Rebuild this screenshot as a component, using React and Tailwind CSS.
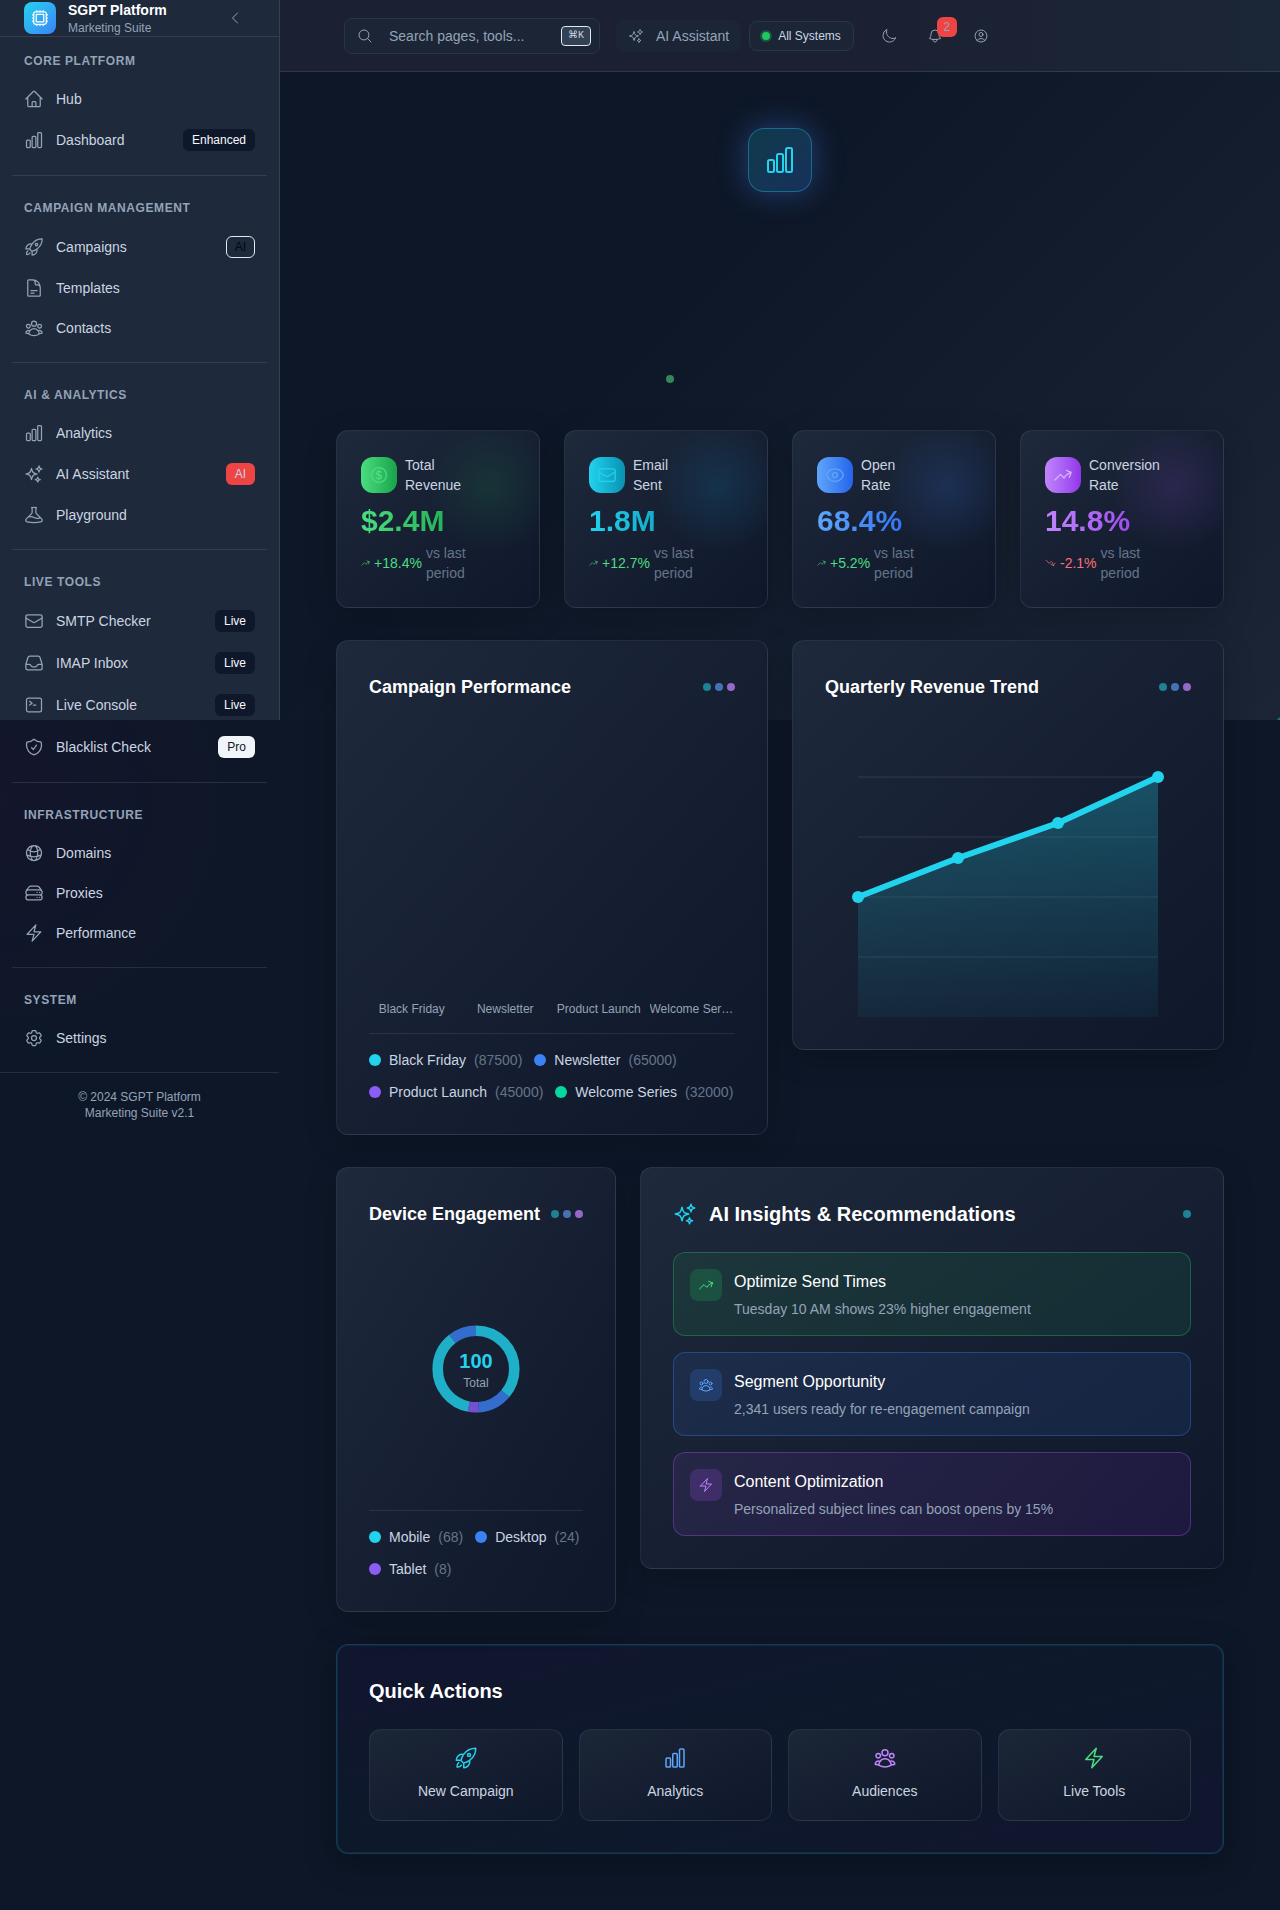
import React from "react";
import {
  HiOutlineArrowTrendingDown,
  HiOutlineArrowTrendingUp,
  HiOutlineBeaker,
  HiOutlineBell,
  HiOutlineBolt,
  HiOutlineChartBar,
  HiOutlineChevronLeft,
  HiOutlineCog6Tooth,
  HiOutlineCommandLine,
  HiOutlineCpuChip,
  HiOutlineCurrencyDollar,
  HiOutlineDocumentText,
  HiOutlineEnvelope,
  HiOutlineEye,
  HiOutlineGlobeAlt,
  HiOutlineHome,
  HiOutlineInbox,
  HiOutlineMagnifyingGlass,
  HiOutlineMoon,
  HiOutlineRocketLaunch,
  HiOutlineServerStack,
  HiOutlineShieldCheck,
  HiOutlineSparkles,
  HiOutlineUserCircle,
  HiOutlineUserGroup,
} from "react-icons/hi2";

const badgeStyles = {
  dark: "border-transparent bg-[#0f172a] text-[#f8fafc]",
  outline: "border-[#e2e8f0] text-[#020617]",
  red: "border-transparent bg-[#ef4444] text-[#cbd5e1]",
  light: "border-transparent bg-[#f1f5f9] text-[#0f172a]",
};

const sections = [
  {
    title: "CORE PLATFORM",
    items: [
      { icon: HiOutlineHome, label: "Hub" },
      { icon: HiOutlineChartBar, label: "Dashboard", badge: "Enhanced", tone: "dark" },
    ],
  },
  {
    title: "CAMPAIGN MANAGEMENT",
    items: [
      { icon: HiOutlineRocketLaunch, label: "Campaigns", badge: "AI", tone: "outline" },
      { icon: HiOutlineDocumentText, label: "Templates" },
      { icon: HiOutlineUserGroup, label: "Contacts" },
    ],
  },
  {
    title: "AI & ANALYTICS",
    items: [
      { icon: HiOutlineChartBar, label: "Analytics" },
      { icon: HiOutlineSparkles, label: "AI Assistant", badge: "AI", tone: "red" },
      { icon: HiOutlineBeaker, label: "Playground" },
    ],
  },
  {
    title: "LIVE TOOLS",
    items: [
      { icon: HiOutlineEnvelope, label: "SMTP Checker", badge: "Live", tone: "dark" },
      { icon: HiOutlineInbox, label: "IMAP Inbox", badge: "Live", tone: "dark" },
      { icon: HiOutlineCommandLine, label: "Live Console", badge: "Live", tone: "dark" },
      { icon: HiOutlineShieldCheck, label: "Blacklist Check", badge: "Pro", tone: "light" },
    ],
  },
  {
    title: "INFRASTRUCTURE",
    items: [
      { icon: HiOutlineGlobeAlt, label: "Domains" },
      { icon: HiOutlineServerStack, label: "Proxies" },
      { icon: HiOutlineBolt, label: "Performance" },
    ],
  },
  { title: "SYSTEM", items: [{ icon: HiOutlineCog6Tooth, label: "Settings" }] },
];

function Sidebar() {
  return (
    <aside className="h-[720px] w-[280px] shrink-0 border-r border-white/10 bg-[#1e293b]">
      <div className="flex items-center border-b border-white/10 px-6">
        <div className="flex h-8 w-8 items-center justify-center rounded-lg bg-linear-to-br from-[#22d3ee] to-[#3b82f6] text-white">
          <HiOutlineCpuChip size={20} />
        </div>
        <div className="ml-3 flex-1">
          <div className="text-sm font-bold text-white">SGPT Platform</div>
          <div className="text-xs text-[#94a3b8]">Marketing Suite</div>
        </div>
        <button type="button" aria-label="Collapse sidebar" className="mr-3 text-[#94a3b8]">
          <HiOutlineChevronLeft size={16} />
        </button>
      </div>
      <nav className="px-3 pt-4">
        {sections.map((section, i) => (
          <div key={section.title} className={i > 0 ? "mt-[14px] border-t border-white/10 pt-6" : ""}>
            <h2 className="mb-[10px] px-3 text-xs font-semibold tracking-wider text-[#94a3b8]">{section.title}</h2>
            <ul>
              {section.items.map(({ icon: Icon, label, badge, tone }) => (
                <li key={label}>
                  <a href="#" className="flex items-center gap-3 px-3 py-[10px] text-sm text-[#cbd5e1]">
                    <Icon size={20} className="shrink-0 text-[#94a3b8]" />
                    <span className="flex-1">{label}</span>
                    {badge && (
                      <span className={`rounded-md border px-2 py-[2px] text-xs ${badgeStyles[tone]}`}>{badge}</span>
                    )}
                  </a>
                </li>
              ))}
            </ul>
          </div>
        ))}
      </nav>
      <div className="mt-[14px] border-t border-white/10 py-4 text-center text-xs text-[#94a3b8]">
        <div>© 2024 SGPT Platform</div>
        <div>Marketing Suite v2.1</div>
      </div>
    </aside>
  );
}

function Header() {
  return (
    <header className="flex h-[72px] items-center border-b border-white/10 bg-linear-to-r from-[#1b2132] from-60% to-[#1b2636] px-16 text-[#94a3b8]">
      <label className="flex h-9 w-64 items-center rounded-lg border border-[#263645] bg-[#1b2535] pr-2 pl-3">
        <HiOutlineMagnifyingGlass size={16} className="shrink-0" />
        <input
          type="text"
          aria-label="Search"
          placeholder="Search pages, tools..."
          className="ml-4 w-0 flex-1 bg-transparent text-sm outline-none placeholder:text-[#94a3b8]"
        />
        <kbd className="flex h-5 w-[30px] items-center justify-center rounded-sm border border-[#e2e8f0] bg-[#334155] font-['Liberation_Mono','DejaVu_Sans',monospace] text-[10px] text-[#cbd5e1]">
          ⌘K
        </kbd>
      </label>
      <button type="button" className="ml-4 flex h-8 items-center gap-3 rounded-lg bg-[#1b2535] px-3 text-sm">
        <HiOutlineSparkles size={16} />
        AI Assistant
      </button>
      <button
        type="button"
        className="ml-2 flex h-[30px] items-center gap-2 rounded-lg border border-[#263645] bg-[#1b2535] px-3 text-xs text-[#cbd5e1]"
      >
        <span className="h-2 w-2 rounded-full bg-[#22c55e] ring-2 ring-[#22c55e]/30" />
        All Systems
      </button>
      <div className="ml-4 flex gap-2">
        <button type="button" aria-label="Toggle theme" className="flex h-8 w-[38px] items-center justify-center">
          <HiOutlineMoon size={16} />
        </button>
        <button
          type="button"
          aria-label="Notifications"
          className="relative flex h-8 w-[38px] items-center justify-center"
        >
          <HiOutlineBell size={16} />
          <span className="absolute -top-[3px] -right-[3px] flex h-5 w-5 items-center justify-center rounded-md bg-[#ef4444] text-xs">
            2
          </span>
        </button>
        <button type="button" aria-label="Account" className="flex h-8 w-[38px] items-center justify-center">
          <HiOutlineUserCircle size={16} />
        </button>
      </div>
    </header>
  );
}

const kpis = [
  {
    icon: HiOutlineCurrencyDollar,
    label: "Total Revenue",
    value: "$2.4M",
    change: "+18.4%",
    up: true,
    fill: "from-[#4ade80] to-[#16a34a]",
    tint: "text-[#4ade80]",
    glow: "bg-[radial-gradient(closest-side,rgba(34,197,94,0.12),transparent)]",
  },
  {
    icon: HiOutlineEnvelope,
    label: "Email Sent",
    value: "1.8M",
    change: "+12.7%",
    up: true,
    fill: "from-[#22d3ee] to-[#0891b2]",
    tint: "text-[#22d3ee]",
    glow: "bg-[radial-gradient(closest-side,rgba(14,165,233,0.14),transparent)]",
  },
  {
    icon: HiOutlineEye,
    label: "Open Rate",
    value: "68.4%",
    change: "+5.2%",
    up: true,
    fill: "from-[#60a5fa] to-[#2563eb]",
    tint: "text-[#60a5fa]",
    glow: "bg-[radial-gradient(closest-side,rgba(59,130,246,0.17),transparent)]",
  },
  {
    icon: HiOutlineArrowTrendingUp,
    label: "Conversion Rate",
    value: "14.8%",
    change: "-2.1%",
    up: false,
    fill: "from-[#c084fc] to-[#9333ea]",
    tint: "text-[#d8b4fe]",
    glow: "bg-[radial-gradient(closest-side,rgba(168,85,247,0.14),transparent)]",
  },
];

const card =
  "rounded-xl border border-[#94a3b8]/15 bg-linear-to-br from-[#1e293b] to-[#0f172a] shadow-[0_8px_32px_rgba(0,0,0,0.2)]";

function KpiCard({ icon: Icon, label, value, change, up, fill, tint, glow }) {
  const Trend = up ? HiOutlineArrowTrendingUp : HiOutlineArrowTrendingDown;
  return (
    <div className={`relative overflow-hidden p-6 ${card}`}>
      <div className={`absolute -top-2 -right-4 h-32 w-32 ${glow}`} />
      <div className="relative">
        <div className="flex items-center gap-2">
          <div className={`flex h-9 w-9 shrink-0 items-center justify-center rounded-xl bg-linear-to-r ${fill} ${tint}`}>
            <Icon size={20} />
          </div>
          <div className="w-min text-sm text-[#cbd5e1]">{label}</div>
        </div>
        <div className={`mt-2 bg-linear-to-r to-75% bg-clip-text text-3xl font-bold text-transparent ${fill}`}>
          {value}
        </div>
        <div className="mt-1 flex items-center gap-1 text-sm">
          <span className={`flex items-center gap-1 ${up ? "text-[#4ade80]" : "text-[#f87171]"}`}>
            <Trend className={up ? "h-4 w-[9px] shrink-0" : "h-4 w-[11px] shrink-0"} />
            {change}
          </span>
          <span className="w-14 text-[#64748b]">vs last period</span>
        </div>
      </div>
    </div>
  );
}

function Dots() {
  return (
    <div className="flex gap-1">
      <span className="h-2 w-2 rounded-full bg-[#1f8294]" />
      <span className="h-2 w-2 rounded-full bg-[#4472b2]" />
      <span className="h-2 w-2 rounded-full bg-[#9368c6]" />
    </div>
  );
}

function CardTitle({ children }) {
  return (
    <div className="flex items-center justify-between">
      <h2 className="text-lg font-bold whitespace-nowrap text-white">{children}</h2>
      <Dots />
    </div>
  );
}

function Legend({ items }) {
  return (
    <ul className="flex flex-wrap gap-3 border-t border-[#94a3b8]/15 pt-4 text-sm">
      {items.map(([label, count, color]) => (
        <li key={label} className="flex items-center gap-2">
          <span className={`h-3 w-3 rounded-full ${color}`} />
          <span className="text-[#cbd5e1]">{label}</span>
          <span className="text-[#64748b]">({count})</span>
        </li>
      ))}
    </ul>
  );
}

const campaigns = [
  ["Black Friday", 87500, "bg-[#22d3ee]"],
  ["Newsletter", 65000, "bg-[#3b82f6]"],
  ["Product Launch", 45000, "bg-[#8b5cf6]"],
  ["Welcome Series", 32000, "bg-[#06d6a0]"],
];

const devices = [
  ["Mobile", 68, "bg-[#22d3ee]"],
  ["Desktop", 24, "bg-[#3b82f6]"],
  ["Tablet", 8, "bg-[#8b5cf6]"],
];

const trend = [
  [33, 172],
  [133, 133],
  [233, 98],
  [333, 52],
];

function TrendChart() {
  const line = trend.map((p) => p.join(",")).join(" ");
  return (
    <svg viewBox="0 0 366 292" className="mt-6 block w-full" role="img" aria-label="Quarterly revenue trend">
      <defs>
        <linearGradient id="area" x1="0" y1="0" x2="0" y2="1">
          <stop offset="0" stopColor="#22d3ee" stopOpacity="0.28" />
          <stop offset="1" stopColor="#22d3ee" stopOpacity="0.05" />
        </linearGradient>
      </defs>
      {[52, 112, 172, 232].map((y) => (
        <line key={y} x1="33" x2="333" y1={y} y2={y} stroke="#ffffff" strokeOpacity="0.05" strokeWidth="2" />
      ))}
      <polygon points={`${line} 333,292 33,292`} fill="url(#area)" />
      <polyline points={line} fill="none" stroke="#22d3ee" strokeWidth="6" strokeLinejoin="round" />
      {trend.map(([x, y]) => (
        <circle key={x} cx={x} cy={y} r="6" fill="#22d3ee" />
      ))}
    </svg>
  );
}

const arcs = [
  [0, 130, "#22d3ee"],
  [130, 176, "#3b82f6"],
  [176, 191, "#8b5cf6"],
  [191, 322, "#22d3ee"],
  [322, 360, "#3b82f6"],
];

function Donut() {
  return (
    <div className="my-6 flex h-[234px] items-center justify-center">
      <div className="grid place-items-center">
        <svg width="88" height="88" viewBox="0 0 88 88" className="col-start-1 row-start-1 -rotate-90" aria-hidden="true">
          {arcs.map(([from, to, color]) => (
            <circle
              key={from}
              cx="44"
              cy="44"
              r="38.3"
              fill="none"
              stroke={color}
              strokeOpacity="0.8"
              strokeWidth="10.6"
              pathLength="360"
              strokeDasharray={`${to - from} 360`}
              strokeDashoffset={-from}
            />
          ))}
        </svg>
        <div className="col-start-1 row-start-1 text-center">
          <div className="text-xl font-bold text-[#22d3ee]">100</div>
          <div className="text-xs text-[#94a3b8]">Total</div>
        </div>
      </div>
    </div>
  );
}

const insights = [
  {
    icon: HiOutlineArrowTrendingUp,
    title: "Optimize Send Times",
    text: "Tuesday 10 AM shows 23% higher engagement",
    box: "border-[#22c55e]/35 from-[#22c55e]/10 to-[#22c55e]/10",
    chip: "bg-[#22c55e]/20 text-[#4ade80]",
  },
  {
    icon: HiOutlineUserGroup,
    title: "Segment Opportunity",
    text: "2,341 users ready for re-engagement campaign",
    box: "border-[#3b82f6]/35 from-[#3b82f6]/10 to-[#3b82f6]/10",
    chip: "bg-[#3b82f6]/20 text-[#60a5fa]",
  },
  {
    icon: HiOutlineBolt,
    title: "Content Optimization",
    text: "Personalized subject lines can boost opens by 15%",
    box: "border-[#a855f7]/35 from-[#a855f7]/10 to-[#a020f0]/10",
    chip: "bg-[#a855f7]/20 text-[#c084fc]",
  },
];

const actions = [
  [HiOutlineRocketLaunch, "New Campaign", "text-[#22d3ee]"],
  [HiOutlineChartBar, "Analytics", "text-[#60a5fa]"],
  [HiOutlineUserGroup, "Audiences", "text-[#c084fc]"],
  [HiOutlineBolt, "Live Tools", "text-[#4ade80]"],
];

export default function App() {
  return (
    <div className="flex min-h-screen bg-[#0e1728] bg-[radial-gradient(circle_at_0px_800px,rgba(70,10,70,0.1),transparent_240px)] font-['Liberation_Sans',Arial,sans-serif]">
      <Sidebar />
      <div className="min-w-0 flex-1 bg-[radial-gradient(circle_at_100%_100%,#1f6f8a_2px,transparent_3px),linear-gradient(135deg,transparent_40%,#1b2536_100%)] bg-[length:100%_720px] bg-no-repeat">
        <Header />
        <main className="p-14">
          <div className="mx-auto flex h-16 w-16 items-center justify-center rounded-2xl border border-[#22d3ee]/35 bg-linear-to-br from-[#0f3a4a] to-[#18305c] text-[#22d3ee] shadow-[0_0_30px_rgba(59,130,246,0.4)]">
            <HiOutlineChartBar size={32} />
          </div>
          <div className="mx-auto mt-[183px] w-[228px]">
            <div className="h-2 w-2 rounded-full bg-[#34875c]" />
          </div>

          <section className="mt-[47px] grid grid-cols-4 gap-6">
            {kpis.map((k) => (
              <KpiCard key={k.label} {...k} />
            ))}
          </section>

          <section className="mt-8 grid grid-cols-2 items-start gap-6">
            <div className={`p-8 ${card}`}>
              <CardTitle>Campaign Performance</CardTitle>
              <div className="mt-[300px] mb-4 grid grid-cols-4 gap-2 text-center text-xs text-[#94a3b8]">
                {campaigns.map(([name]) => (
                  <div key={name} className="truncate">
                    {name}
                  </div>
                ))}
              </div>
              <Legend items={campaigns} />
            </div>
            <div className={`p-8 ${card}`}>
              <CardTitle>Quarterly Revenue Trend</CardTitle>
              <TrendChart />
            </div>
          </section>

          <section className="mt-8 grid grid-cols-3 items-start gap-6">
            <div className={`p-8 ${card}`}>
              <CardTitle>Device Engagement</CardTitle>
              <Donut />
              <Legend items={devices} />
            </div>
            <div className={`col-span-2 p-8 ${card}`}>
              <div className="flex items-center gap-3">
                <HiOutlineSparkles size={24} className="text-[#22d3ee]" />
                <h2 className="flex-1 text-xl font-bold text-white">AI Insights &amp; Recommendations</h2>
                <span className="h-2 w-2 rounded-full bg-[#1f8294]" />
              </div>
              <div className="mt-6 flex flex-col gap-4">
                {insights.map(({ icon: Icon, title, text, box, chip }) => (
                  <div key={title} className={`flex items-start gap-3 rounded-xl border bg-linear-to-r p-4 ${box}`}>
                    <div className={`flex h-8 w-8 items-center justify-center rounded-lg ${chip}`}>
                      <Icon size={16} />
                    </div>
                    <div>
                      <h3 className="text-base leading-[26px] text-white">{title}</h3>
                      <p className="mt-1 text-sm text-[#94a3b8]">{text}</p>
                    </div>
                  </div>
                ))}
              </div>
            </div>
          </section>

          <section className="mt-8 rounded-xl border border-[#22d3ee]/20 bg-linear-to-br from-[#11152f] via-[#0d192b] to-[#11152f] p-8 shadow-[0_8px_32px_rgba(0,0,0,0.3),inset_0_0_0_1px_rgba(34,211,238,0.1)]">
            <h2 className="text-xl font-bold text-white">Quick Actions</h2>
            <div className="mt-6 grid grid-cols-4 gap-4">
              {actions.map(([Icon, label, color]) => (
                <button
                  key={label}
                  type="button"
                  className="flex h-[92px] flex-col items-center gap-[11px] rounded-xl border border-[#94a3b8]/15 bg-linear-to-br from-[#1b2637] to-[#0f172a] pt-4 text-sm text-[#cbd5e1]"
                >
                  <Icon size={24} className={color} />
                  {label}
                </button>
              ))}
            </div>
          </section>
        </main>
      </div>
    </div>
  );
}
